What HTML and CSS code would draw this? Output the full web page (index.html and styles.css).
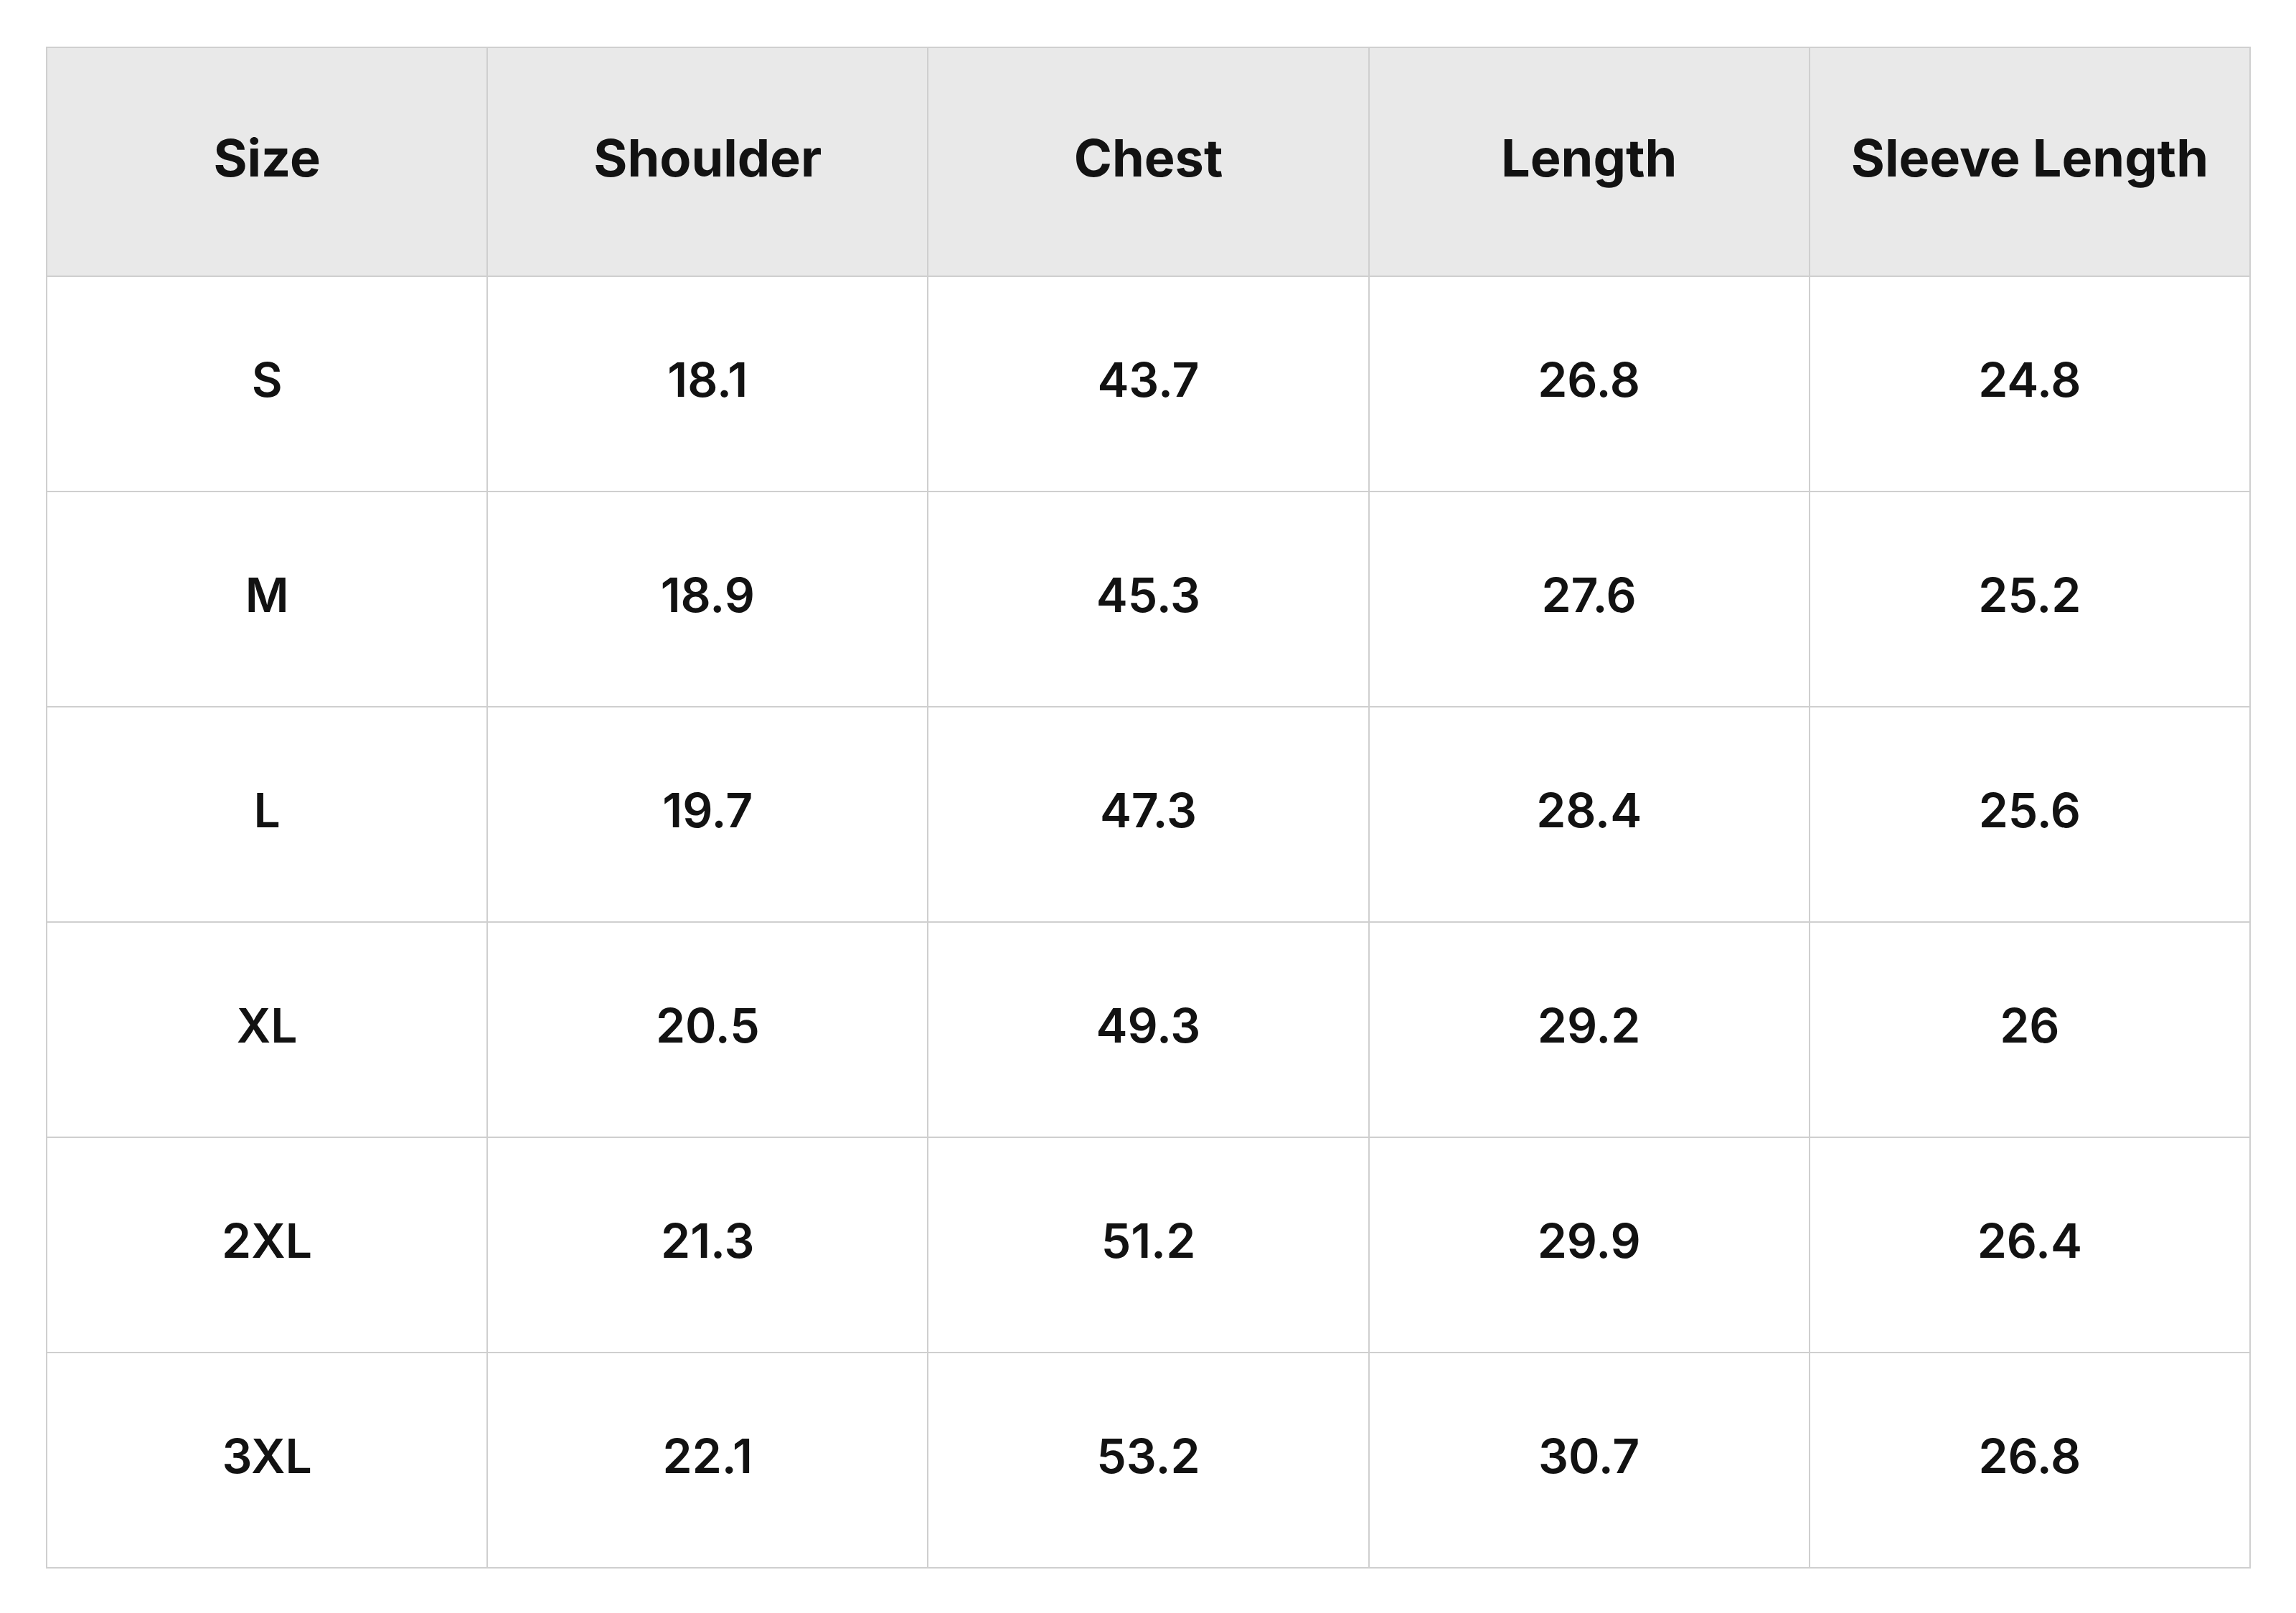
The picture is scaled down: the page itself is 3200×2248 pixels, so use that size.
FILE: index.html
```html
<!DOCTYPE html>
<html>
<head>
<meta charset="utf-8">
<link rel="stylesheet" href="styles.css">
</head>
<body>
<div class="page">
<table class="size-table">
  <thead>
    <tr><th>Size</th><th>Shoulder</th><th>Chest</th><th>Length</th><th>Sleeve Length</th></tr>
  </thead>
  <tbody>
    <tr><td>S</td><td>18.1</td><td>43.7</td><td>26.8</td><td>24.8</td></tr>
    <tr><td>M</td><td>18.9</td><td>45.3</td><td>27.6</td><td>25.2</td></tr>
    <tr><td>L</td><td>19.7</td><td>47.3</td><td>28.4</td><td>25.6</td></tr>
    <tr><td>XL</td><td>20.5</td><td>49.3</td><td>29.2</td><td>26</td></tr>
    <tr><td>2XL</td><td>21.3</td><td>51.2</td><td>29.9</td><td>26.4</td></tr>
    <tr><td>3XL</td><td>22.1</td><td>53.2</td><td>30.7</td><td>26.8</td></tr>
  </tbody>
</table>
</div>
</body>
</html>
```

FILE: styles.css
```css
html, body {
  margin: 0;
  padding: 0;
  background: #ffffff;
}
.page {
  padding: 65px 64px;
}
.size-table {
  width: 3073px;
  border-collapse: collapse;
  table-layout: fixed;
  font-family: Inter, "Liberation Sans", sans-serif;
  color: #121212;
}
.size-table th,
.size-table td {
  border: 2px solid #cfcfcf;
  text-align: center;
  vertical-align: middle;
  padding: 0 0 12px 0;
}
.size-table th {
  background: #e9e9e9;
  height: 305px;
  font-size: 72px;
  font-weight: 700;
}
.size-table td {
  height: 286px;
  font-size: 66px;
  font-weight: 600;
}
```
